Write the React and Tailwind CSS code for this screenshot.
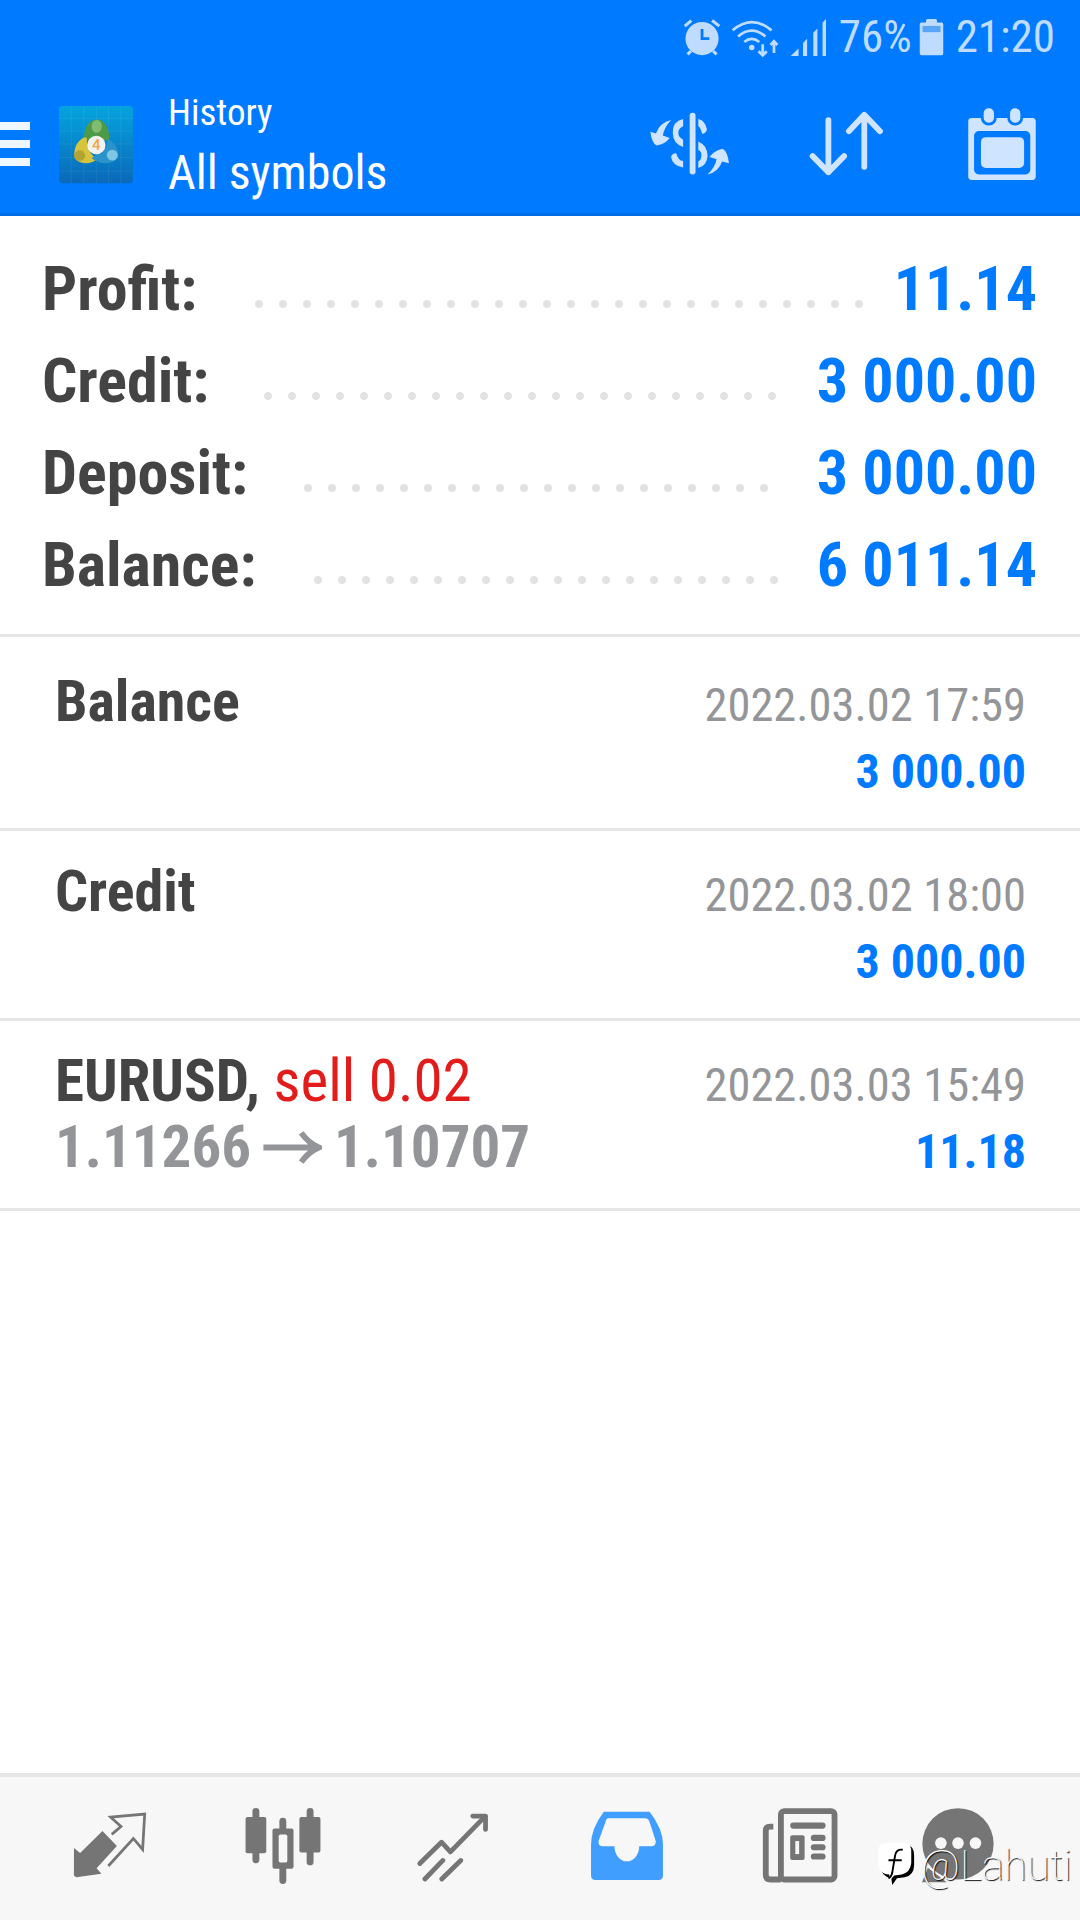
import React from 'react';

const summary = [
  { label: 'Profit:', value: '11.14', dots: 'ml-[50px] w-[624px]' },
  { label: 'Credit:', value: '3 000.00', dots: 'ml-[47px] w-[528px]' },
  { label: 'Deposit:', value: '3 000.00', dots: 'ml-[48px] w-[480px]' },
  { label: 'Balance:', value: '6 011.14', dots: 'ml-[49px] w-[480px]' },
];

const Scaled = ({ vb, className, children }) => (
  <svg viewBox={vb} className={className}>{children}</svg>
);

const Alarm = () => (
  <Scaled vb="420 50 110 115" className="w-[38px] h-[40px]">
    <circle cx="478" cy="112" r="48" fill="#bfdcff" />
    <path d="M478 84V112H499" fill="none" stroke="#007aff" strokeWidth="8" />
    <path d="M428 76L447 60M528 76L507 60M436 158L446 148M520 158L510 148" stroke="#bfdcff" strokeWidth="9" />
  </Scaled>
);

const Wifi = () => (
  <Scaled vb="565 45 145 120" className="w-[50px] h-[41px]">
    <g fill="none" stroke="#bfdcff" strokeWidth="8">
      <path d="M572 84Q628 36 686 84" />
      <path d="M588 102Q628 68 668 102" />
      <path d="M606 118Q628 100 650 118" />
      <path d="M660 125V156M648 145L660 157L672 145M693 118V150M683 127L693 116L703 127" />
    </g>
    <circle cx="628" cy="134" r="8" fill="#bfdcff" />
  </Scaled>
);

const Signal = () => (
  <Scaled vb="725 50 108 112" className="w-[37px] h-[39px]">
    <path d="M727 160L750 138V160ZM763 122L775 110V160H763ZM793 92L805 80V160H793ZM820 62L830 52V160H820Z" fill="#bfdcff" />
  </Scaled>
);

const Battery = () => (
  <Scaled vb="1105 52 72 110" className="w-[25px] h-[38px]">
    <path d="M1125 65V60Q1125 55 1130 55H1152Q1157 55 1157 60V65H1170Q1175 65 1175 70V155Q1175 160 1170 160H1112Q1107 160 1107 155V70Q1107 65 1112 65Z" fill="#bfdcff" />
    <rect x="1115" y="75" width="52" height="18" fill="#5aa5f5" />
  </Scaled>
);

const DollarSwap = () => (
  <Scaled vb="318 335 235 185" className="w-[81px] h-[64px]">
    <g fill="#cfe4ff">
      <rect x="436" y="337" width="17" height="179" rx="8" />
      <path d="M417 355Q386 362 387 395Q388 428 417 436V415Q403 408 403 395Q403 382 417 376Z" />
      <path d="M461 355Q482 360 486 385Q484 398 472 398Q468 380 461 375Z" />
      <path d="M461 420Q488 432 488 462Q486 490 461 497V478Q470 474 470 460Q470 448 461 445Z" />
      <path d="M397 454Q402 475 417 477V496Q386 490 382 465Q384 454 397 454Z" />
      <path d="M382 358Q350 365 338 397L322 392Q326 425 340 432Q365 428 378 410L358 403Q362 380 382 358Z" />
      <path d="M488 516Q520 508 530 478L550 483Q546 450 532 441Q506 446 494 465L514 472Q510 495 488 516Z" />
    </g>
  </Scaled>
);

const Arrows = () => (
  <Scaled vb="780 332 218 196" className="w-[75px] h-[67px]">
    <g fill="none" stroke="#cfe4ff" strokeWidth="17" strokeLinecap="round" strokeLinejoin="round">
      <path d="M836 362V514M790 467L836 514L882 467" />
      <path d="M941 498V346M896 394L941 346L987 394" />
    </g>
  </Scaled>
);

const Calendar = () => (
  <Scaled vb="1240 320 203 216" className="w-[70px] h-[74px]">
    <rect x="1243" y="352" width="197" height="181" rx="10" fill="#cfe4ff" />
    <rect x="1260" y="390" width="164" height="127" rx="14" fill="#007aff" />
    <rect x="1280" y="408" width="126" height="90" rx="14" fill="#cfe4ff" />
    <rect x="1284" y="320" width="38" height="50" rx="18" fill="#cfe4ff" stroke="#007aff" strokeWidth="8" />
    <rect x="1361" y="320" width="38" height="50" rx="18" fill="#cfe4ff" stroke="#007aff" strokeWidth="8" />
  </Scaled>
);

const Mt4Logo = () => (
  <Scaled vb="170 318 218 230" className="w-[76px] h-[78px] mt-[3px]">
    <defs>
      <linearGradient id="tile" x1="0" y1="0" x2="0" y2="1">
        <stop offset="0" stopColor="#04a4de" />
        <stop offset="1" stopColor="#0a68b8" />
      </linearGradient>
    </defs>
    <rect x="170" y="318" width="218" height="228" rx="12" fill="url(#tile)" />
    <path d="M206 318V546M243 318V546M280 318V546M316 318V546M352 318V546M170 355H388M170 392H388M170 430H388M170 470H388M170 510H388" stroke="#ffffff" strokeOpacity="0.1" strokeWidth="2" />
    <path d="M281 358C305 358 320 385 318 420L245 420C240 385 258 358 281 358Z" fill="#4f9a49" />
    <ellipse cx="281" cy="378" rx="15" ry="19" fill="#7fbd72" />
    <path d="M245 410C222 420 212 445 216 470C222 488 262 494 282 474C262 462 252 440 252 412Z" fill="#d6c43c" />
    <circle cx="231" cy="464" r="16" fill="#b2a432" />
    <path d="M315 415C338 430 348 450 344 468C336 488 296 496 266 472L310 440Z" fill="#2b93c9" />
    <circle cx="327" cy="463" r="16" fill="#7fc6e4" />
    <circle cx="280" cy="433" r="27" fill="#f2f2f2" />
    <text x="280" y="449" textAnchor="middle" fontSize="44" fontWeight="500" fill="#f4a640" fontFamily="Roboto, sans-serif">4</text>
  </Scaled>
);

const NavTrade = () => (
  <Scaled vb="210 160 220 198" className="w-[76px] h-[68px]">
    <path d="M215 268L233 282L298 218L340 262L281 327L295 343L222 353L215 348Z" fill="#757575" />
    <path d="M325 228L352 205L322 178L421 169L415 272L388 240L315 320" fill="none" stroke="#757575" strokeWidth="8" />
  </Scaled>
);

const NavQuotes = () => (
  <Scaled vb="705 145 225 226" className="w-[78px] h-[78px]">
    <g fill="#757575">
      <rect x="729" y="148" width="20" height="160" rx="10" />
      <rect x="709" y="174" width="60" height="105" rx="6" />
      <rect x="807" y="176" width="20" height="192" rx="10" />
      <rect x="787" y="207" width="61" height="117" rx="6" />
      <rect x="886" y="148" width="20" height="166" rx="10" />
      <rect x="865" y="174" width="61" height="103" rx="6" />
    </g>
    <rect x="805" y="225" width="25" height="81" rx="5" fill="#f7f7f7" />
  </Scaled>
);

const NavChart = () => (
  <Scaled vb="1210 150 215 205" className="w-[74px] h-[71px]">
    <g fill="none" stroke="#757575" strokeWidth="14" strokeLinecap="round" strokeLinejoin="round">
      <path d="M1221 302L1284 240L1310 268L1408 168" />
      <path d="M1375 164H1412V203" />
      <path d="M1236 347L1288 293M1285 347L1340 293" />
    </g>
  </Scaled>
);

const NavHistory = () => (
  <Scaled vb="145 153 215 203" className="w-[74px] h-[70px]">
    <path d="M185 155H318Q357 205 357 250V340Q357 353 344 353H161Q148 353 148 340V250Q148 205 185 155Z" fill="#3f9eff" />
    <path d="M198 174H305Q315 174 318 185L336 240Q337 255 325 255H288A36 44 0 0 1 216 255H180Q168 255 170 240L190 185Q192 174 198 174Z" fill="#f7f7f7" />
  </Scaled>
);

const NavNews = () => (
  <Scaled vb="645 143 224 224" className="w-[77px] h-[77px]">
    <g fill="none" stroke="#757575" strokeWidth="17">
      <rect x="700" y="155" width="156" height="199" rx="10" />
      <path d="M678 200H668Q656 200 656 212V340Q656 354 670 354H700" />
    </g>
    <g fill="#757575">
      <rect x="727" y="188" width="103" height="18" rx="9" />
      <rect x="727" y="225" width="42" height="72" rx="6" />
      <rect x="787" y="224" width="43" height="18" rx="9" />
      <rect x="787" y="251" width="43" height="18" rx="9" />
      <rect x="787" y="278" width="43" height="18" rx="9" />
    </g>
    <rect x="742" y="242" width="11" height="38" fill="#f7f7f7" />
  </Scaled>
);

const NavChat = () => (
  <Scaled vb="1105 143 216 224" className="w-[74px] h-[77px]">
    <circle cx="1213" cy="250" r="104" fill="#757575" />
    <path d="M1125 320L1108 362H1180Z" fill="#757575" />
    <circle cx="1163" cy="248" r="17" fill="#f7f7f7" />
    <circle cx="1213" cy="248" r="17" fill="#f7f7f7" />
    <circle cx="1264" cy="248" r="17" fill="#f7f7f7" />
  </Scaled>
);

const WatermarkLogo = () => (
  <Scaled vb="0 0 40 44" className="w-[38px] h-[42px]">
    <path d="M11 2H29Q38 2 38 13V23Q38 34 28 36L20 37L15 44L14 37Q3 35 2 23V11Q2 2 11 2Z" fill="#000000" />
    <path d="M9 0H27Q36 0 35 11V21Q34 31 25 33L17 34L12 40L12 33Q1 33 0 21V9Q0 0 9 0Z" fill="#ffffff" />
    <path d="M26 7Q19 6 18 13L15 31Q14 36 11 37M11 18H25" fill="none" stroke="#000000" strokeWidth="2" />
  </Scaled>
);

const TradeArrow = () => (
  <Scaled vb="0 0 60 34" className="inline-block w-[59px] h-[33px] mx-[12px]">
    <path d="M0 17H55M39 2Q46 12 57 17Q46 22 39 32" fill="none" stroke="#939598" strokeWidth="6" />
  </Scaled>
);

const Amount = ({ date, value }) => (
  <div className="flex flex-col items-end pt-[12px]">
    <div className="text-[46.5px] leading-[66px] text-[#939598] [font-stretch:75%]">{date}</div>
    <div className="text-[48px] leading-[68px] font-bold text-[#007aff] [font-stretch:75%]">{value}</div>
  </div>
);

const Row = ({ title, date, value, box }) => (
  <div className={`flex justify-between border-b-[3px] border-[#e6e6e6] pl-[55px] pr-[54px] ${box}`}>
    <div className="pt-[8px] text-[58px] leading-[66px] font-bold text-[#444444] [font-stretch:75%]">{title}</div>
    <Amount date={date} value={value} />
  </div>
);

export default function App() {
  return (
    <div className="relative w-[1080px] h-[1920px] flex flex-col bg-white font-['Roboto',sans-serif]">
      <header className="h-[216px] bg-[#007aff] border-b-[3px] border-[#006fe6] flex flex-col">
        <div className="h-[74px] flex items-center justify-end gap-[12px] pr-[25px] text-[#bfdcff] text-[45px] [font-stretch:75%]">
          <div className="flex items-center gap-[10px]">
            <Alarm />
            <Wifi />
            <Signal />
          </div>
          <span className="-mr-[5px]">76%</span>
          <Battery />
          <span>21:20</span>
        </div>
        <div className="flex-1 flex items-center">
          <div className="w-[30px] flex flex-col gap-[10px] mr-[28px]">
            <div className="h-[8px] bg-[#eef6ff]" />
            <div className="h-[8px] bg-[#eef6ff]" />
            <div className="h-[8px] bg-[#eef6ff]" />
          </div>
          <Mt4Logo />
          <div className="ml-[34px] flex flex-col text-white [font-stretch:75%] pt-[10px]">
            <span className="text-[37px] leading-[48px]">History</span>
            <span className="text-[48px] leading-[72px]">All symbols</span>
          </div>
          <div className="ml-auto flex items-center">
            <DollarSwap />
            <div className="ml-[79px]"><Arrows /></div>
            <div className="ml-[83px] mr-[43px]"><Calendar /></div>
          </div>
        </div>
      </header>

      <section className="h-[421px] pt-[26px] border-b-[3px] border-[#e6e6e6]">
        {summary.map((row) => (
          <div key={row.label} className="h-[92px] flex items-center pl-[42px] pr-[43px] text-[62px] font-bold [font-stretch:75%]">
            <span className="text-[#444444]">{row.label}</span>
            <span className={`h-[8px] mt-[32px] bg-[radial-gradient(circle,#e2e2e2_3.5px,transparent_4.5px)] bg-[length:24px_8px] bg-repeat-x ${row.dots}`} />
            <span className="ml-auto text-[#007aff]">{row.value}</span>
          </div>
        ))}
      </section>

      <Row title="Balance" date="2022.03.02 17:59" value="3 000.00" box="h-[194px] pt-[23px]" />
      <Row title="Credit" date="2022.03.02 18:00" value="3 000.00" box="h-[190px] pt-[19px]" />
      <div className="h-[190px] flex justify-between border-b-[3px] border-[#e6e6e6] pl-[55px] pr-[54px] pt-[19px]">
        <div className="pt-[8px] text-[59px] leading-[66px] [font-stretch:75%]">
          <div>
            <span className="font-bold text-[#444444]">EURUSD,</span>{' '}
            <span className="text-[#e21b1b]">sell 0.02</span>
          </div>
          <div className="font-bold text-[#939598] flex items-center">
            1.11266<TradeArrow />1.10707
          </div>
        </div>
        <Amount date="2022.03.03 15:49" value="11.18" />
      </div>

      <div className="flex-1" />

      <nav className="h-[147px] bg-[#f7f7f7] border-t-4 border-[#e6e6e6] flex items-start pl-[72px] pt-[34px]">
        <div className="w-[172px]"><NavTrade /></div>
        <div className="w-[172px] -mt-[4px]"><NavQuotes /></div>
        <div className="w-[174px]"><NavChart /></div>
        <div className="w-[172px]"><NavHistory /></div>
        <div className="w-[159px] -mt-[4px]"><NavNews /></div>
        <div className="-mt-[4px]"><NavChat /></div>
      </nav>

      <div className="absolute left-[878px] top-[1843px] flex items-start gap-[5px]">
        <WatermarkLogo />
        <span className="text-[42px] leading-[46px] font-thin text-white [text-shadow:1px_1px_1px_#000]">@Lahuti</span>
      </div>
    </div>
  );
}
